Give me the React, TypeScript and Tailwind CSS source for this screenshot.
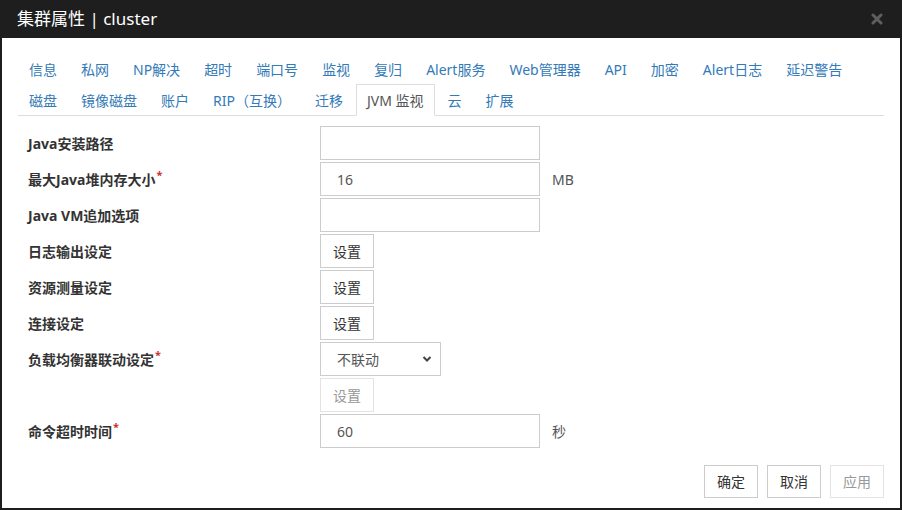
import React from 'react';

const row1 = ['信息', '私网', 'NP解决', '超时', '端口号', '监视', '复归', 'Alert服务', 'Web管理器', 'API', '加密', 'Alert日志', '延迟警告'];
const row2 = ['磁盘', '镜像磁盘', '账户', 'RIP（互换）', '迁移', 'JVM 监视', '云', '扩展'];
const ACTIVE = 'JVM 监视';

function Tab({ label }: { label: string }) {
  const active = label === ACTIVE;
  return (
    <li
      className={`h-[32px] -mb-px mr-[2px] px-[10px] flex items-center text-[14px] border ${
        active
          ? 'bg-white border-[#ddd] border-b-transparent text-[#555]'
          : 'border-transparent text-[#337ab7]'
      }`}
    >
      {label}
    </li>
  );
}

function Label({ text, required }: { text: string; required?: boolean }) {
  return (
    <div className="w-[292px] shrink-0 text-[14px] font-bold text-[#333]">
      {text}
      {required && <sup className="text-[#c9302c] text-[11px] ml-[1px]">*</sup>}
    </div>
  );
}

function Input({ value }: { value?: string }) {
  return (
    <input
      readOnly
      value={value ?? ''}
      className="w-[220px] h-[34px] border border-[#ccc] px-[16px] text-[14px] text-[#555] outline-none"
    />
  );
}

function SetButton({ disabled }: { disabled?: boolean }) {
  return (
    <button
      className={`w-[54px] h-[34px] border text-[14px] bg-white ${
        disabled ? 'border-[#e3e3e3] text-[#999]' : 'border-[#ccc] text-[#333]'
      }`}
    >
      设置
    </button>
  );
}

function Row({ children }: { children: React.ReactNode }) {
  return <div className="h-[34px] mb-[2px] flex items-center">{children}</div>;
}

export default function App() {
  return (
    <div
      className="w-[902px] h-[510px] bg-[#1e1e1e] flex flex-col"
      style={{ fontFamily: '"Noto Sans", "Noto Sans CJK SC", sans-serif' }}
    >
      <div className="h-[38px] shrink-0 flex items-center justify-between pl-[17px] pr-[19px]">
        <div className="text-[17px] text-white">集群属性 | cluster</div>
        <svg width="12" height="12" viewBox="0 0 12 12">
          <path d="M2 2 L10 10 M10 2 L2 10" stroke="#5e5e5e" strokeWidth="3" strokeLinecap="round" />
        </svg>
      </div>
      <div className="flex-1 bg-white mx-[2px] mb-[2px] px-[16px] pt-[15px] pb-[10px] flex flex-col">
        <ul className="flex flex-wrap border-b border-[#ddd]">
          {row1.map((t) => (
            <Tab key={t} label={t} />
          ))}
          <li className="basis-full h-0" />
          {row2.map((t) => (
            <Tab key={t} label={t} />
          ))}
        </ul>
        <div className="mt-[10px] px-[10px]">
          <Row>
            <Label text="Java安装路径" />
            <Input />
          </Row>
          <Row>
            <Label text="最大Java堆内存大小" required />
            <Input value="16" />
            <span className="ml-[12px] text-[14px] text-[#555]">MB</span>
          </Row>
          <Row>
            <Label text="Java VM追加选项" />
            <Input />
          </Row>
          <Row>
            <Label text="日志输出设定" />
            <SetButton />
          </Row>
          <Row>
            <Label text="资源测量设定" />
            <SetButton />
          </Row>
          <Row>
            <Label text="连接设定" />
            <SetButton />
          </Row>
          <Row>
            <Label text="负载均衡器联动设定" required />
            <div className="relative w-[121px] h-[34px] border border-[#ccc] flex items-center pl-[16px] text-[14px] text-[#555]">
              不联动
              <svg className="absolute right-[8px] top-[12px]" width="10" height="8" viewBox="0 0 10 8">
                <path d="M1.5 2 L5 5.5 L8.5 2" stroke="#444" strokeWidth="2" fill="none" />
              </svg>
            </div>
          </Row>
          <Row>
            <div className="w-[292px] shrink-0" />
            <SetButton disabled />
          </Row>
          <Row>
            <Label text="命令超时时间" required />
            <Input value="60" />
            <span className="ml-[12px] text-[14px] text-[#555]">秒</span>
          </Row>
        </div>
        <div className="mt-[15px] flex justify-end gap-[9px]">
          <button className="w-[54px] h-[33px] border border-[#ccc] text-[14px] text-[#333] bg-white">确定</button>
          <button className="w-[54px] h-[33px] border border-[#ccc] text-[14px] text-[#333] bg-white">取消</button>
          <button className="w-[54px] h-[33px] border border-[#e3e3e3] text-[14px] text-[#999] bg-white">应用</button>
        </div>
      </div>
    </div>
  );
}
